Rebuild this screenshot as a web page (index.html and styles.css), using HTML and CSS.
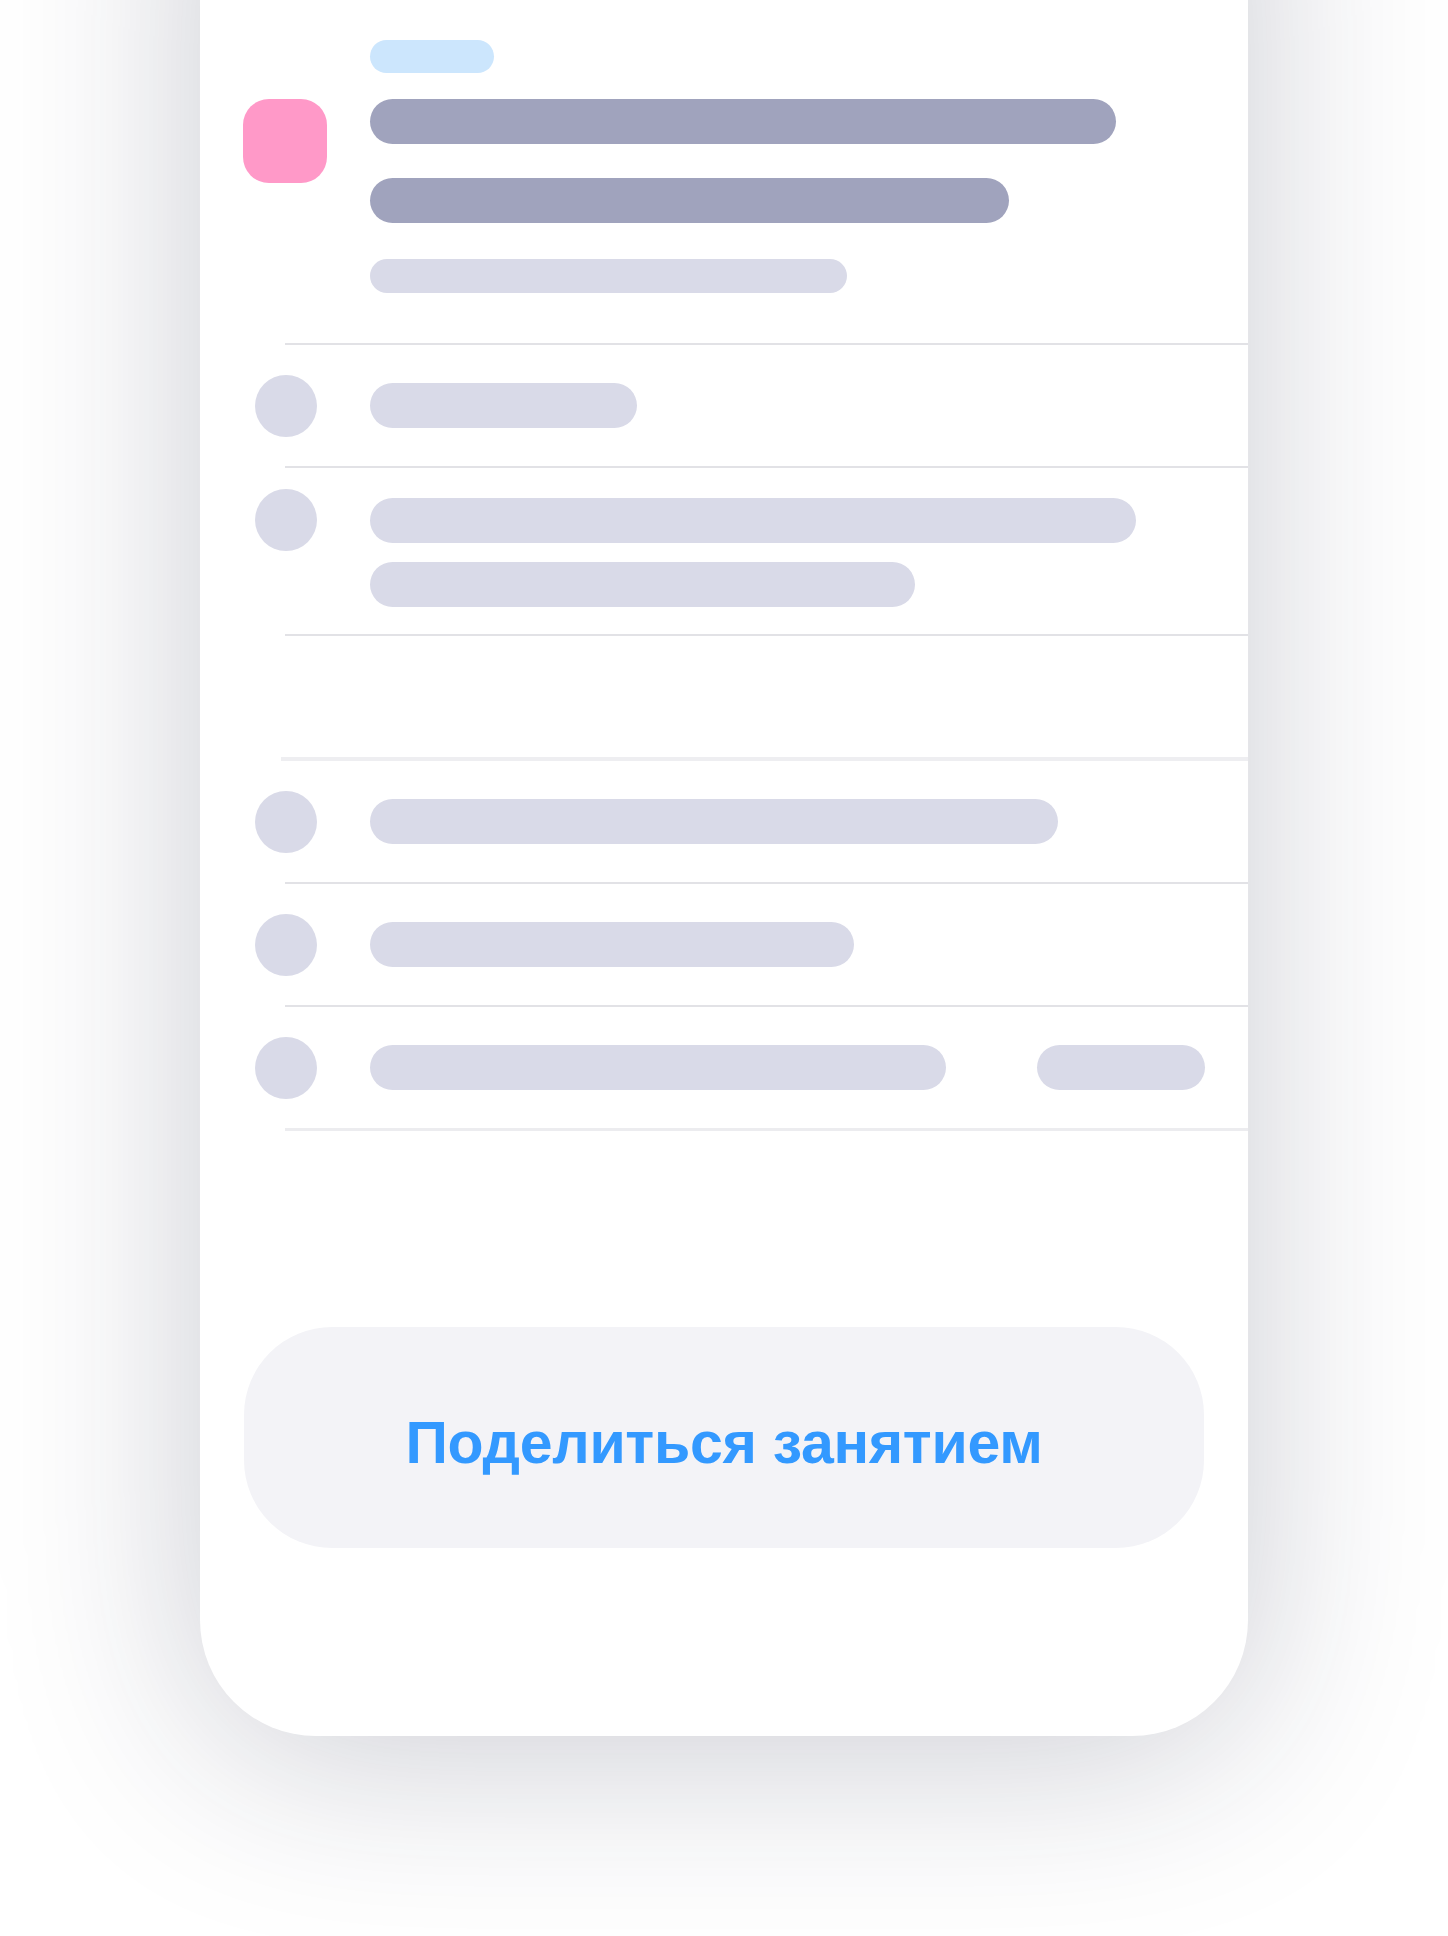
FILE: index.html
```html
<!DOCTYPE html>
<html lang="ru">
<head>
<meta charset="utf-8">
<title>Поделиться занятием</title>
<link rel="stylesheet" href="styles.css">
</head>
<body>
<div class="phone">
  <div class="header">
    <div class="avatar"></div>
    <div class="lines">
      <div class="tag"></div>
      <div class="bar dark w746 mt26"></div>
      <div class="bar dark w639 mt34"></div>
      <div class="bar light sub w477 mt36"></div>
    </div>
  </div>
  <div class="list">
    <div class="row">
      <div class="dot"></div>
      <div class="bar light w267"></div>
    </div>
    <div class="row tall">
      <div class="dot"></div>
      <div class="stack">
        <div class="bar light w766"></div>
        <div class="bar light w545"></div>
      </div>
    </div>
    <div class="row empty"></div>
    <div class="row section">
      <div class="dot"></div>
      <div class="bar light w688"></div>
    </div>
    <div class="row">
      <div class="dot"></div>
      <div class="bar light w484"></div>
    </div>
    <div class="row last">
      <div class="dot"></div>
      <div class="bar light w576"></div>
      <div class="bar light w168 push"></div>
    </div>
  </div>
  <div class="share">Поделиться занятием</div>
</div>
</body>
</html>
```
FILE: styles.css
```css
html, body {
  margin: 0;
  padding: 0;
  background: #ffffff;
}
body {
  height: 1936px;
  overflow: hidden;
  font-family: "Liberation Sans", Arial, sans-serif;
}
.phone {
  box-sizing: border-box;
  width: 1048px;
  height: 1936px;
  margin: -200px 0 0 200px;
  padding-top: 200px;
  background: #ffffff;
  border-radius: 0 0 116px 116px;
  box-shadow: 0 16px 200px rgba(25, 30, 60, 0.23);
}
.header {
  display: flex;
  align-items: flex-start;
  padding: 40px 0 50px 43px;
}
.avatar {
  width: 84px;
  height: 84px;
  margin-top: 59px;
  border-radius: 26px;
  background: #ff99c8;
}
.lines {
  display: flex;
  flex-direction: column;
  margin-left: 43px;
}
.tag {
  width: 124px;
  height: 33px;
  border-radius: 17px;
  background: #cce6fd;
}
.bar {
  height: 45px;
  border-radius: 23px;
  flex: none;
}
.bar.dark { background: #a0a3bd; }
.bar.light { background: #d9dae8; }
.bar.sub { height: 34px; border-radius: 17px; }
.mt26 { margin-top: 26px; }
.mt34 { margin-top: 34px; }
.mt36 { margin-top: 36px; }
.w746 { width: 746px; }
.w639 { width: 639px; }
.w477 { width: 477px; }
.w267 { width: 267px; }
.w766 { width: 766px; }
.w545 { width: 545px; }
.w688 { width: 688px; }
.w484 { width: 484px; }
.w576 { width: 576px; }
.w168 { width: 168px; }
.push { margin-left: auto; }

.list {
  margin-left: 85px;
}
.row {
  display: flex;
  align-items: center;
  height: 121px;
  padding-right: 43px;
  border-top: 2px solid #e2e2e6;
}
.dot {
  flex: none;
  width: 62px;
  height: 62px;
  border-radius: 50%;
  background: #d9dae8;
  margin-left: -30px;
  margin-right: 53px;
}
.row.tall {
  align-items: flex-start;
  height: auto;
  padding-top: 21px;
  padding-bottom: 27px;
}
.stack {
  display: flex;
  flex-direction: column;
  gap: 19px;
  margin-top: 9px;
}
.row.section {
  margin-left: -4px;
  border-top: 4px solid #eeeef1;
}
.row.section .dot {
  margin-left: -26px;
}
.row.last {
  border-bottom: 3px solid #ececef;
}
.share {
  box-sizing: border-box;
  height: 221px;
  margin: 196px 44px 0;
  padding-top: 11px;
  border-radius: 88px;
  background: #f3f3f7;
  display: flex;
  align-items: center;
  justify-content: center;
  color: #3399ff;
  font-family: "Liberation Sans", Arial, sans-serif;
  font-weight: 700;
  font-size: 59px;
  letter-spacing: -0.3px;
}
```
